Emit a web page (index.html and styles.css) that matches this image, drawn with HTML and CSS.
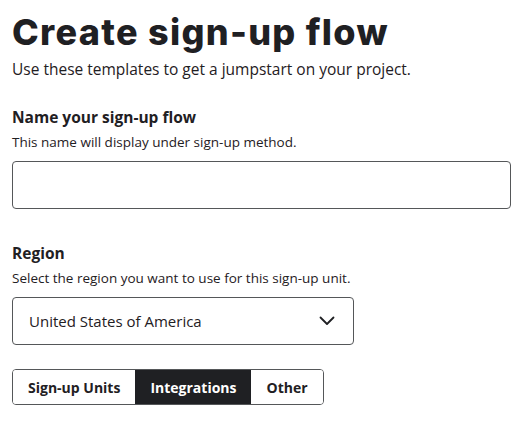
FILE: index.html
```html
<!DOCTYPE html>
<html lang="en">
<head>
    <meta charset="UTF-8">
    <title>Create sign-up flow</title>
    <link rel="stylesheet" href="styles.css">
</head>
<body>
<div class="page">
    <h1 class="title">Create sign-up flow</h1>
    <p class="subtitle">Use these templates to get a jumpstart on your project.</p>

    <div class="field field_name">
        <label class="field_label" for="flow_name">Name your sign-up flow</label>
        <p class="field_hint">This name will display under sign-up method.</p>
        <input type="text" class="text_input" id="flow_name">
    </div>

    <div class="field field_region">
        <label class="field_label" for="region">Region</label>
        <p class="field_hint">Select the region you want to use for this sign-up unit.</p>
        <div class="select_box" id="region">
            <span>United States of America</span>
            <svg class="chevron" width="16" height="10" viewBox="0 0 16 10">
                <path d="M1.5 1.5 L8 8 L14.5 1.5" fill="none" stroke="#1f2023" stroke-width="1.8" stroke-linecap="round" stroke-linejoin="round"/>
            </svg>
        </div>
    </div>

    <div class="tabs">
        <button class="tab">Sign-up Units</button>
        <button class="tab tab_active">Integrations</button>
        <button class="tab">Other</button>
    </div>
</div>
</body>
</html>
```

FILE: styles.css
```css
body {
  margin: 0;
  background: #ffffff;
  color: #1f2023;
  font-family: "Open Sans", sans-serif;
}

.page {
  padding: 10px 12px;
}

.title {
  margin: 0;
  font-family: "Inter", sans-serif;
  font-weight: 800;
  font-size: 36px;
  line-height: 44px;
  letter-spacing: 1.3px;
}

.subtitle {
  margin: 5px 0 0;
  font-size: 15.5px;
  line-height: 20px;
}

.field_name {
  margin-top: 27px;
}

.field_region {
  margin-top: 33px;
}

.field_label {
  display: block;
  font-size: 15.5px;
  font-weight: 700;
  line-height: 22px;
}

.field_hint {
  margin: 5px 0 10px;
  font-size: 13.5px;
  line-height: 18px;
}

.text_input {
  display: block;
  box-sizing: border-box;
  width: 499px;
  height: 48px;
  border: 1px solid #555759;
  border-radius: 4px;
  outline: none;
}

.select_box {
  box-sizing: border-box;
  width: 342px;
  height: 48px;
  border: 1px solid #555759;
  border-radius: 4px;
  display: flex;
  align-items: center;
  justify-content: space-between;
  padding: 0 18px 0 16px;
  font-size: 15px;
}

.chevron {
  display: block;
}

.tabs {
  margin-top: 24px;
  display: inline-flex;
  border: 1px solid #555759;
  border-radius: 4px;
  overflow: hidden;
}

.tab {
  height: 34px;
  padding: 0 15px;
  border: none;
  background: #ffffff;
  color: #1f2023;
  font-family: "Open Sans", sans-serif;
  font-size: 14px;
  font-weight: 700;
}

.tab_active {
  background: #1f2023;
  color: #ffffff;
}
```
